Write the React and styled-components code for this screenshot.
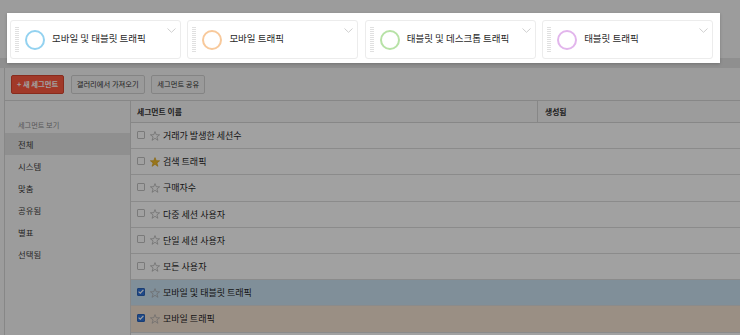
import React from "react";
import styled, { createGlobalStyle } from "styled-components";

const GlobalStyle = createGlobalStyle`
  html, body {
    margin: 0;
    padding: 0;
  }

  body {
    background: #f7f7f7;
    color: #333;
    font-family: "Noto Sans CJK KR", "Noto Sans", sans-serif;
    overflow: hidden;
  }
`;

const Page = styled.div`
  background: #f7f7f7;
  display: flex;
  flex-direction: column;
  height: 335px;
  width: 740px;
`;

const Header = styled.header`
  box-sizing: border-box;
  flex-shrink: 0;
  height: 58px;
  padding: 13px 0 0 7px;
`;

const Spotlight = styled.div`
  background: #ffffff;
  box-shadow: 0 1px 3px rgba(0, 0, 0, 0.2);
  box-sizing: border-box;
  height: 50px;
  padding: 7px 7px 4px 3px;
  position: relative;
  width: 713px;
  z-index: 20;
`;

const CardGrid = styled.div`
  display: grid;
  gap: 6.5px;
  grid-template-columns: repeat(4, 1fr);
  height: 39px;
`;

const Card = styled.div`
  align-items: center;
  background: #ffffff;
  border: 1px solid #ececec;
  border-radius: 3px;
  display: flex;
  padding: 0 4px;
`;

const Handle = styled.span`
  background: repeating-linear-gradient(
    to bottom,
    #e0e0e0 0 1px,
    transparent 1px 2px
  );
  flex-shrink: 0;
  height: 26px;
  width: 4px;
`;

const Ring = styled.span`
  border: 2.5px solid ${({ $color }) => $color};
  border-radius: 50%;
  box-sizing: border-box;
  flex-shrink: 0;
  height: 20px;
  margin-left: 6px;
  width: 20px;
`;

const CardLabel = styled.span`
  color: #2a2a2a;
  flex: 1;
  font-size: 9.5px;
  margin-left: 7px;
  padding-bottom: 4px;
  white-space: nowrap;
`;

const Chevron = styled.svg`
  align-self: flex-start;
  flex-shrink: 0;
  margin-top: 7px;
`;

const Band = styled.div`
  background: #e2e2e2;
  flex-shrink: 0;
  height: 10px;
`;

const Main = styled.main`
  background: #f8f8f8;
  border-left: 1px solid #d6d6d6;
  display: flex;
  flex: 1;
  flex-direction: column;
  margin-left: 4px;
  min-height: 0;
`;

const Toolbar = styled.div`
  border-bottom: 1px solid #d6d6d6;
  box-sizing: border-box;
  display: flex;
  flex-shrink: 0;
  gap: 6.5px;
  height: 33px;
  padding: 7px 0 0 6px;
`;

const Button = styled.button`
  background: ${({ $primary }) => ($primary ? "#ff5b42" : "#f4f4f4")};
  border: 1px solid ${({ $primary }) => ($primary ? "#d8452f" : "#d2d2d2")};
  border-radius: 2px;
  color: ${({ $primary }) => ($primary ? "#ffffff" : "#333")};
  font-family: inherit;
  font-size: 7.3px;
  font-weight: ${({ $primary }) => ($primary ? 700 : 400)};
  height: 19px;
  line-height: 17px;
  padding: 0 5px;
`;

const Body = styled.div`
  display: grid;
  flex: 1;
  grid-template-columns: 126px 1fr;
  min-height: 0;
`;

const Sidebar = styled.nav`
  border-right: 1px solid #d6d6d6;
  display: flex;
  flex-direction: column;
`;

const SidebarTitle = styled.div`
  color: #8a8a8a;
  font-size: 7.2px;
  height: 12px;
  line-height: 12px;
  margin: 18px 0 2px;
  padding-left: 13px;
`;

const SidebarItem = styled.div`
  background: ${({ $active }) => ($active ? "#e3e3e3" : "transparent")};
  color: #3c3c3c;
  font-size: 8.4px;
  height: 22px;
  line-height: 22px;
  padding-left: 13px;
`;

const Table = styled.div`
  background: #ffffff;
  display: flex;
  flex-direction: column;
`;

const HeadRow = styled.div`
  background: #f8f8f8;
  border-bottom: 1px solid #d6d6d6;
  box-sizing: border-box;
  display: grid;
  grid-template-columns: 406px 1fr;
  height: 22px;
`;

const HeadCell = styled.div`
  color: #333;
  font-size: 7.8px;
  font-weight: 700;
  line-height: 21px;
  padding-left: ${({ $pad }) => $pad}px;

  & + & {
    border-left: 1px solid #d6d6d6;
  }
`;

const Row = styled.div`
  align-items: center;
  background: ${({ $tone }) =>
    $tone === "blue" ? "#cbe2f2" : $tone === "tan" ? "#f4e2d2" : "#ffffff"};
  border-bottom: 1px solid #dddddd;
  box-sizing: border-box;
  display: flex;
  flex-shrink: 0;
  height: 26.2px;
  padding-left: 6px;
`;

const Check = styled.span`
  align-items: center;
  background: ${({ $on }) => ($on ? "#2f72d8" : "#ffffff")};
  border: 1px solid ${({ $on }) => ($on ? "#2a62b8" : "#c2c2c2")};
  border-radius: 1px;
  box-sizing: border-box;
  display: flex;
  flex-shrink: 0;
  height: 8px;
  justify-content: center;
  margin-top: -2px;
  width: 8px;
`;

const Star = styled.svg`
  flex-shrink: 0;
  margin-left: 5px;
`;

const RowLabel = styled.span`
  color: #262626;
  font-size: 9px;
  margin-left: 3px;
  white-space: nowrap;
`;

const Overlay = styled.div`
  background: rgba(0, 0, 0, 0.37);
  inset: 0;
  position: fixed;
  z-index: 10;
`;

const cards = [
  { label: "모바일 및 태블릿 트래픽", color: "#93d2f0" },
  { label: "모바일 트래픽", color: "#f8c99b" },
  { label: "태블릿 및 데스크톱 트래픽", color: "#b7e2a6" },
  { label: "태블릿 트래픽", color: "#e2b5ec" },
];

const views = ["전체", "시스템", "맞춤", "공유됨", "별표", "선택됨"];

const segments = [
  { name: "거래가 발생한 세션수" },
  { name: "검색 트래픽", starred: true },
  { name: "구매자수" },
  { name: "다중 세션 사용자" },
  { name: "단일 세션 사용자" },
  { name: "모든 사용자" },
  { name: "모바일 및 태블릿 트래픽", checked: true, tone: "blue" },
  { name: "모바일 트래픽", checked: true, tone: "tan" },
];

const StarIcon = ({ filled }) => (
  <Star width="10" height="10" viewBox="0 0 10 10">
    <polygon
      points="5,0.6 6.2,3.7 9.6,3.8 6.9,5.9 7.9,9.3 5,7.3 2.1,9.3 3.1,5.9 0.4,3.8 3.8,3.7"
      fill={filled ? "#f2bb2c" : "none"}
      stroke={filled ? "#d9a31c" : "#a9a9a9"}
      strokeWidth="0.7"
      strokeLinejoin="round"
    />
  </Star>
);

const SegmentCard = ({ label, color }) => (
  <Card>
    <Handle />
    <Ring $color={color} />
    <CardLabel>{label}</CardLabel>
    <Chevron width="9" height="5" viewBox="0 0 9 5">
      <polyline
        points="0.5,0.5 4.5,4.3 8.5,0.5"
        fill="none"
        stroke="#cfcfcf"
        strokeWidth="1"
      />
    </Chevron>
  </Card>
);

const App = () => (
  <>
    <GlobalStyle />
    <Page>
      <Header>
        <Spotlight>
          <CardGrid>
            {cards.map((card) => (
              <SegmentCard key={card.label} {...card} />
            ))}
          </CardGrid>
        </Spotlight>
      </Header>

      <Band />

      <Main>
        <Toolbar>
          <Button $primary>+ 새 세그먼트</Button>
          <Button>갤러리에서 가져오기</Button>
          <Button>세그먼트 공유</Button>
        </Toolbar>

        <Body>
          <Sidebar>
            <SidebarTitle>세그먼트 보기</SidebarTitle>
            {views.map((view, i) => (
              <SidebarItem key={view} $active={i === 0}>
                {view}
              </SidebarItem>
            ))}
          </Sidebar>

          <Table>
            <HeadRow>
              <HeadCell $pad={6}>세그먼트 이름</HeadCell>
              <HeadCell $pad={7}>생성됨</HeadCell>
            </HeadRow>

            {segments.map((seg) => (
              <Row key={seg.name} $tone={seg.tone}>
                <Check $on={seg.checked}>
                  {seg.checked && (
                    <svg width="6" height="5" viewBox="0 0 6 5">
                      <polyline
                        points="0.6,2.6 2.3,4.1 5.4,0.8"
                        fill="none"
                        stroke="#ffffff"
                        strokeWidth="1.2"
                      />
                    </svg>
                  )}
                </Check>
                <StarIcon filled={seg.starred} />
                <RowLabel>{seg.name}</RowLabel>
              </Row>
            ))}
          </Table>
        </Body>
      </Main>
    </Page>
    <Overlay />
  </>
);

export default App;
